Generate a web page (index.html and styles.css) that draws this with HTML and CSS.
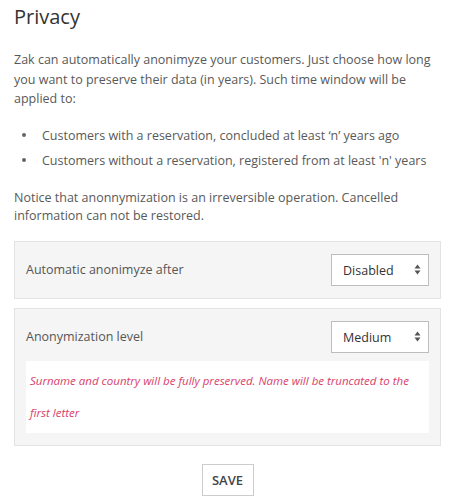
FILE: index.html
```html
<!DOCTYPE html>
<html>
<head>
<meta charset="utf-8">
<link rel="stylesheet" href="styles.css">
</head>
<body>
<div class="page">
  <h1 class="title">Privacy</h1>
  <p class="intro">Zak can automatically anonimyze your customers. Just choose how long you want to preserve their data (in years). Such time window will be applied to:</p>
  <ul class="list">
    <li>Customers with a reservation, concluded at least ‘n’ years ago</li>
    <li>Customers without a reservation, registered from at least 'n' years</li>
  </ul>
  <p class="notice">Notice that anonnymization is an irreversible operation. Cancelled information can not be restored.</p>
  <div class="panel">
    <div class="row">
      <span class="label">Automatic anonimyze after</span>
      <div class="select"><span>Disabled</span><svg class="arrows" width="7" height="11" viewBox="0 0 7 11"><path d="M3.5 0.5 L6.5 4.5 L0.5 4.5 Z M3.5 10.5 L6.5 6.5 L0.5 6.5 Z" fill="#555"/></svg></div>
    </div>
  </div>
  <div class="panel">
    <div class="row">
      <span class="label">Anonymization level</span>
      <div class="select"><span>Medium</span><svg class="arrows" width="7" height="11" viewBox="0 0 7 11"><path d="M3.5 0.5 L6.5 4.5 L0.5 4.5 Z M3.5 10.5 L6.5 6.5 L0.5 6.5 Z" fill="#555"/></svg></div>
    </div>
    <div class="hint">Surname and country will be fully preserved. Name will be truncated to the first letter</div>
  </div>
  <div class="actions">
    <button class="save">SAVE</button>
  </div>
</div>
</body>
</html>
```
FILE: styles.css
```css
html, body {
  margin: 0;
  padding: 0;
  background: #fff;
}
.page {
  font-family: "Open Sans", "Liberation Sans", sans-serif;
  color: #595959;
  font-size: 12.5px;
  padding: 0 8px 0 14px;
}
.title {
  margin: 0;
  padding-top: 3px;
  font-size: 20px;
  font-weight: 400;
  color: #333;
  line-height: 28px;
}
.intro {
  margin: 19px 0 0;
  line-height: 19.5px;
}
.list {
  margin: 17px 0 0;
  padding: 0;
  list-style: none;
}
.list li {
  display: flex;
  align-items: center;
  line-height: 19px;
  margin-bottom: 6px;
}
.list li::before {
  content: "";
  width: 4px;
  height: 4px;
  border-radius: 50%;
  background: #666;
  margin-left: 8px;
  margin-right: 16px;
  flex: none;
}
.notice {
  margin: 19px 0 0;
  line-height: 18.5px;
}
.panel {
  background: #f5f5f5;
  border: 1px solid #e3e3e3;
  padding: 12px 11px;
  margin-top: 9px;
  width: 403px;
}
.notice + .panel {
  margin-top: 15px;
}
.row {
  display: flex;
  align-items: center;
  justify-content: space-between;
}
.label {
  color: #555;
}
.select {
  box-sizing: border-box;
  width: 98px;
  height: 32px;
  background: #fff;
  border: 1px solid #bdbdbd;
  display: flex;
  align-items: center;
  justify-content: space-between;
  padding: 2px 7px 0 11px;
  color: #333;
  font-size: 12.5px;
}
.arrows {
  margin-top: -3px;
}
.hint {
  background: #fff;
  margin-top: 8px;
  padding: 4px 4px 4px 4px;
  font-style: italic;
  font-size: 11.5px;
  line-height: 32px;
  color: #d9416b;
}
.actions {
  display: flex;
  justify-content: center;
  margin-top: 18px;
}
.save {
  font-family: "Open Sans", "Liberation Sans", sans-serif;
  font-size: 13px;
  font-weight: 600;
  color: #444;
  background: #fff;
  border: 1px solid #ccc;
  width: 52px;
  height: 32px;
  padding: 0;
}
```
